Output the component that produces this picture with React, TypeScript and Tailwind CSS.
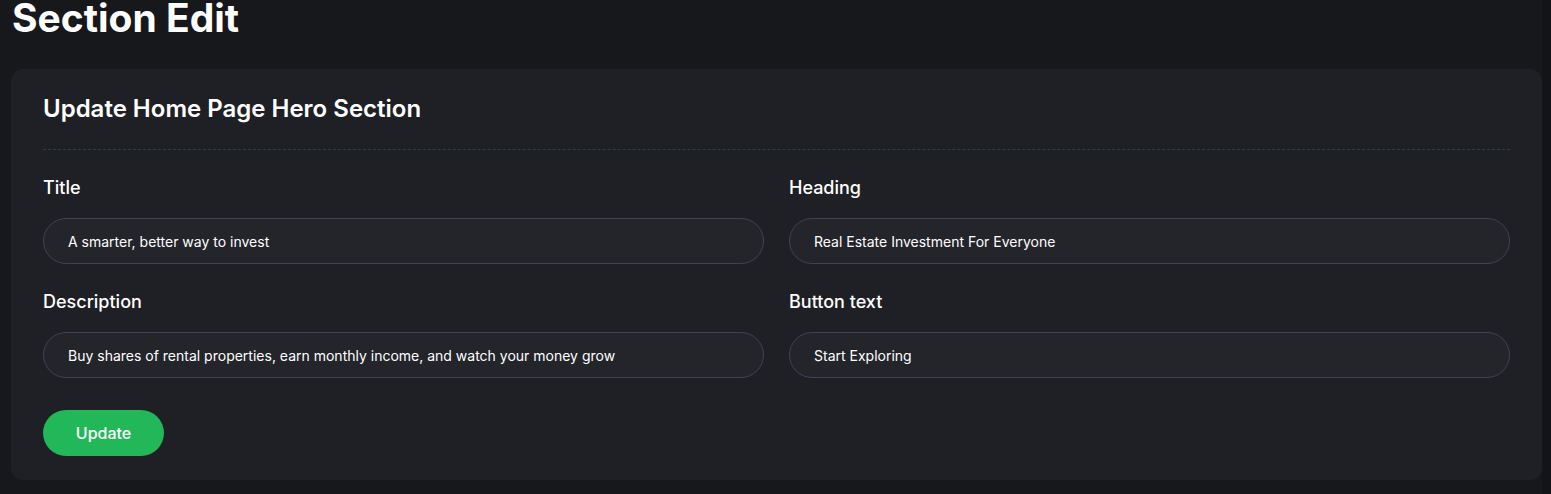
import React from "react";

const font = { fontFamily: "Inter, 'Noto Sans', sans-serif" };

function Field({ label, value }: { label: string; value: string }) {
  return (
    <div className="flex flex-col">
      <label className="text-[18px] leading-7 font-medium text-white">{label}</label>
      <div className="mt-4 h-[46px] rounded-full border border-[#3d4458] bg-[#23252b] px-6 flex items-center text-[14px] text-white">
        {value}
      </div>
    </div>
  );
}

export default function App() {
  return (
    <div className="min-h-[494px] bg-[#131418]" style={font}>
      <div className="w-[1542px] min-h-[494px] bg-[#17181c] pl-[11px] pb-[14px]">
        <h1 className="text-[39px] leading-[40px] font-bold text-white pl-px -mt-[2px]">Section Edit</h1>
        <div className="mt-[31px] rounded-xl bg-[#1f2025] px-8 pt-6 pb-6">
          <h2 className="text-[24px] leading-8 font-semibold text-white">Update Home Page Hero Section</h2>
          <div className="mt-6 border-t border-dashed border-[#2c4434]" />
          <div className="mt-6 grid grid-cols-2 gap-x-[25px] gap-y-6">
            <Field label="Title" value="A smarter, better way to invest" />
            <Field label="Heading" value="Real Estate Investment For Everyone" />
            <Field label="Description" value="Buy shares of rental properties, earn monthly income, and watch your money grow" />
            <Field label="Button text" value="Start Exploring" />
          </div>
          <button className="mt-8 h-[46px] w-[121px] rounded-full bg-[#22b85a] text-white text-[16px] font-medium">
            Update
          </button>
        </div>
      </div>
    </div>
  );
}
